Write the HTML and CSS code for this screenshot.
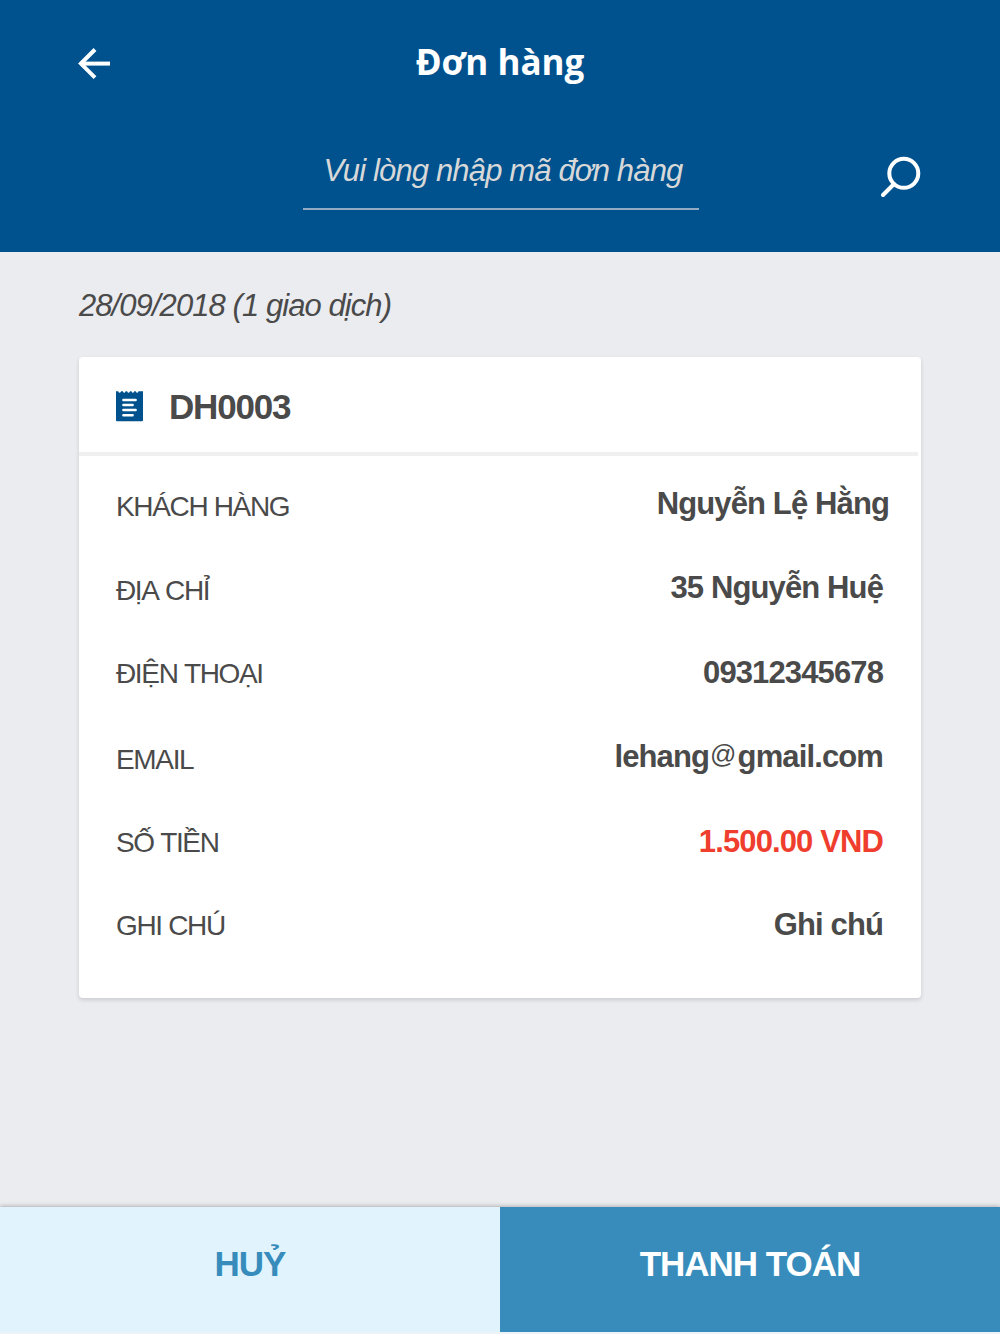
FILE: index.html
```html
<!DOCTYPE html>
<html lang="vi">

<head>
    <meta charset="UTF-8">
    <meta name="viewport" content="width=device-width, initial-scale=1.0">
    <title>Đơn hàng</title>
    <link rel="stylesheet" href="styles.css">
</head>

<body>
    <header class="header">
        <div class="titleBar">
            <svg class="backIcon" width="34" height="34" viewBox="0 0 34 34" fill="none" stroke="#fff">
                <path d="M19 2.5 4.9 16.6 19 30.7" stroke-width="4" />
                <path d="M5 16.6h29" stroke-width="4" />
            </svg>
            <h1>Đơn hàng</h1>
        </div>
        <div class="searchBar">
            <input type="text" class="searchInput" placeholder="Vui lòng nhập mã đơn hàng">
            <svg class="searchIcon" width="42" height="42" viewBox="0 0 42 42" fill="none" stroke="#fff" stroke-width="4">
                <circle cx="24.8" cy="17.3" r="14.5" />
                <path d="M15 28 4 39" stroke-linecap="round" />
            </svg>
        </div>
    </header>

    <main class="content">
        <p class="date">28/09/2018 (1 giao dịch)</p>

        <div class="card">
            <div class="cardHeader">
                <svg class="billIcon" width="27" height="31" viewBox="0 0 27 31">
                    <path fill="#00528f" d="M0 .2h2.2q1.2 3.2 3 0h1.6q1.4 3.2 2.9 0h1.4q1.4 3.2 2.9 0h1.4q1.4 3.2 2.9 0h1.4q1.4 3.2 2.9 0H27V29.3q0 1-1 1H1q-1 0-1-1z" />
                    <path d="M7.4 9h12.2M7.4 14h9.2M7.4 19.1h12.2M7.4 24.2h9.2" stroke="#fff" stroke-width="2.5" stroke-linecap="round" />
                </svg>
                <h2>DH0003</h2>
            </div>
            <div class="cardBody">
                <div class="row">
                    <span class="label">KHÁCH HÀNG</span>
                    <span class="value name">Nguyễn Lệ Hằng</span>
                </div>
                <div class="row">
                    <span class="label">ĐỊA CHỈ</span>
                    <span class="value">35 Nguyễn Huệ</span>
                </div>
                <div class="row">
                    <span class="label">ĐIỆN THOẠI</span>
                    <span class="value">09312345678</span>
                </div>
                <div class="row">
                    <span class="label">EMAIL</span>
                    <span class="value">lehang<span class="at">@</span>gmail.com</span>
                </div>
                <div class="row">
                    <span class="label">SỐ TIỀN</span>
                    <span class="value price">1.500.00 VND</span>
                </div>
                <div class="row">
                    <span class="label">GHI CHÚ</span>
                    <span class="value">Ghi chú</span>
                </div>
            </div>
        </div>
    </main>

    <footer class="footer">
        <button class="btn cancel">HUỶ</button>
        <button class="btn pay">THANH TOÁN</button>
    </footer>
</body>

</html>
```

FILE: styles.css
```css
* {
    box-sizing: border-box;
}

body {
    margin: 0;
    height: 1334px;
    display: flex;
    flex-direction: column;
    font-family: "Liberation Sans", Arial, Helvetica, sans-serif;
    font-kerning: none;
    color: #4a4a4a;
    background-color: #ebecf0;
    overflow: hidden;
}

h1,
h2,
p {
    margin: 0;
}

.header {
    height: 252px;
    background-color: #00528f;
    color: white;
}

.titleBar {
    display: grid;
    grid-template-columns: 160px 1fr 160px;
    align-items: start;
    padding-top: 38px;
}

.backIcon {
    margin: 9px 0 0 76px;
}

.titleBar h1 {
    font-family: "Open Sans", sans-serif;
    font-size: 35px;
    font-weight: bold;
    line-height: 48px;
    text-align: center;
}

.searchBar {
    display: flex;
    align-items: flex-start;
    padding: 60px 79px 0 303px;
}

.searchInput {
    width: 396px;
    height: 64px;
    padding: 0 0 12px 4px;
    border: none;
    border-bottom: 2px solid #90abc2;
    outline: none;
    background: transparent;
    font-family: inherit;
    font-size: 31px;
    font-style: italic;
    letter-spacing: -0.85px;
    text-align: center;
}

.searchInput::placeholder {
    color: #d8d8d8;
    opacity: 1;
}

.searchIcon {
    margin: 10px 0 0 auto;
}

.content {
    flex: 1;
    padding: 36px 79px 0;
}

.date {
    font-size: 31px;
    font-style: italic;
    line-height: 36px;
    letter-spacing: -0.93px;
}

.card {
    height: 641px;
    margin-top: 33px;
    border-radius: 4px;
    background-color: white;
    box-shadow: 0 2px 4px rgba(0, 0, 0, 0.14);
}

.cardHeader {
    display: flex;
    align-items: center;
    height: 99px;
    margin-right: 3px;
    padding-left: 37px;
    border-bottom: 4px solid #f0f0f0;
}

.billIcon {
    margin-top: 3px;
}

.cardHeader h2 {
    margin: 4px 0 0 26px;
    font-size: 35px;
    letter-spacing: -1.2px;
}

.cardBody {
    padding: 30px 38px 0 37px;
}

.row {
    display: flex;
    justify-content: space-between;
    height: 84px;
    line-height: 36px;
}

.row:nth-child(2) {
    height: 85px;
}

.row:nth-child(4) {
    height: 85px;
}

.row:nth-child(3) {
    height: 84px;
}

.row:nth-child(5) {
    height: 83px;
}

.label {
    padding-top: 3px;
    font-size: 28px;
    letter-spacing: -1.35px;
}

.row:nth-child(3) .label,
.row:nth-child(5) .label {
    padding-top: 1px;
}

.row:nth-child(6) .label {
    padding-top: 1px;
}

.value {
    font-size: 31px;
    font-weight: bold;
    letter-spacing: -0.88px;
}

.name {
    margin-right: -6px;
}

.at {
    margin: 0 2px 0 1px;
    font-size: 26px;
    font-weight: normal;
    line-height: 1;
    vertical-align: 4px;
}

.price {
    color: #ef3e2d;
}

.footer {
    display: flex;
    height: 127px;
    border-bottom: 2px solid #edf3f7;
    box-shadow: 0 -1px 4px rgba(0, 0, 0, 0.25);
}

.btn {
    flex: 1;
    padding: 0 0 11px;
    border: none;
    font-family: inherit;
    font-size: 35px;
    font-weight: bold;
    letter-spacing: -1px;
    cursor: pointer;
}

.cancel {
    background-color: #e1f4fe;
    color: #378cbc;
}

.pay {
    background-color: #378cbc;
    color: white;
}
```
